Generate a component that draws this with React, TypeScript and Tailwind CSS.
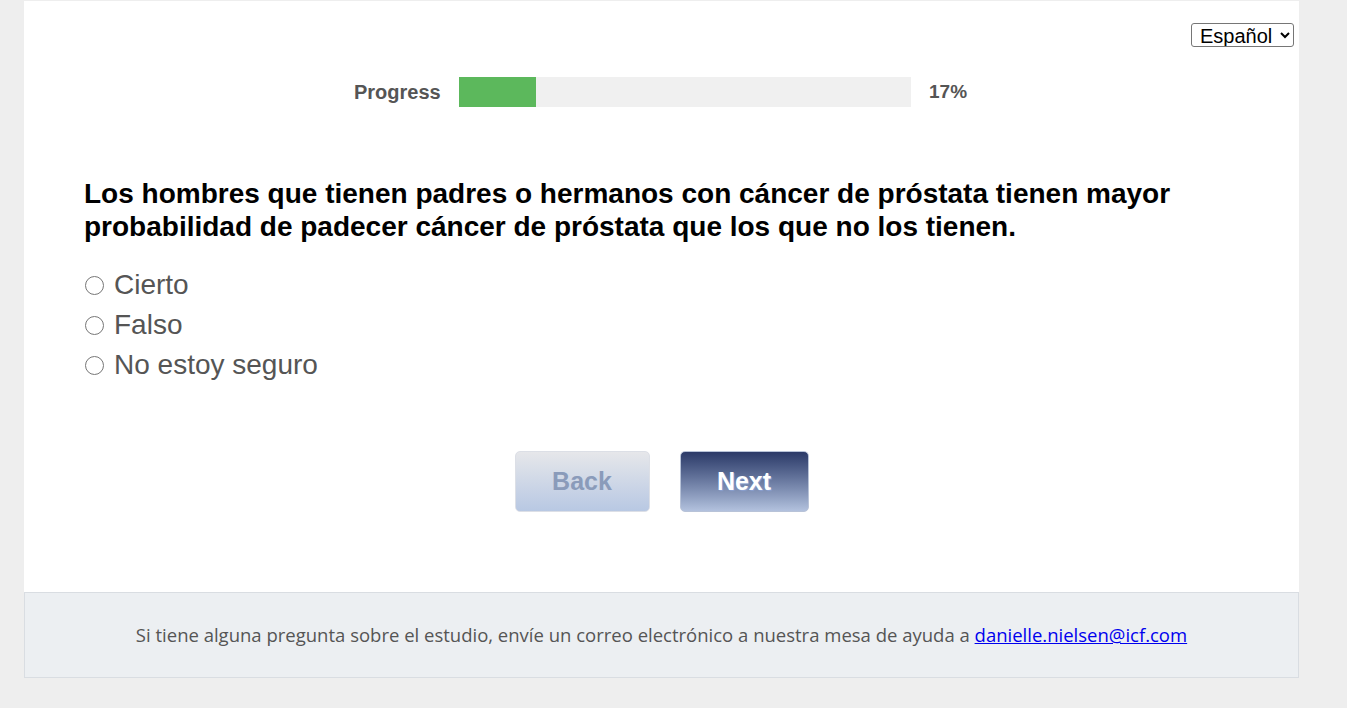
export default function App() {
  return (
    <div className="min-h-[708px] bg-[#eeeeee] pt-px">
      <div className="ml-[24px] w-[1275px] bg-white font-['Liberation_Sans',Arial,sans-serif]">
        <div className="flex justify-end pt-[22px] pr-[5px]">
          <select className="h-[24px] border border-[#767676] rounded-[3px] bg-white text-[20px] text-black px-[4px]" defaultValue="es">
            <option value="es">Español</option>
            <option value="en">English</option>
          </select>
        </div>
        <div className="flex items-center mt-[30px] h-[30px]">
          <span className="ml-[330px] w-[105px] text-[20px] font-bold text-[#555]">Progress</span>
          <div className="w-[452px] h-[30px] bg-[#f0f0f0]">
            <div className="h-full bg-[#5cb85c]" style={{ width: '17%' }} />
          </div>
          <span className="ml-[18px] text-[19px] font-bold text-[#555]">17%</span>
        </div>
        <div className="px-[60px] pt-[70px]">
          <h1 className="text-[28px] leading-[33px] font-bold text-black">
            Los hombres que tienen padres o hermanos con cáncer de próstata tienen mayor probabilidad de padecer cáncer de próstata que los que no los tienen.
          </h1>
          <div className="mt-[22px] flex flex-col">
            {['Cierto', 'Falso', 'No estoy seguro'].map((o) => (
              <label key={o} className="flex items-center h-[40px] text-[28px] text-[#555]">
                <input type="radio" name="q" className="w-[19px] h-[19px] ml-px mr-[10px] accent-[#555]" />
                {o}
              </label>
            ))}
          </div>
        </div>
        <div className="flex justify-center gap-[30px] pt-[66px] pb-[80px]">
          <button className="w-[135px] h-[61px] rounded-[5px] border border-[#dcdfe6] bg-gradient-to-b from-[#e6e7ea] to-[#b8c8e3] text-[25px] font-bold text-[#8a9bba]">
            Back
          </button>
          <button className="w-[129px] h-[61px] rounded-[5px] border border-[#b8c3d8] bg-gradient-to-b from-[#2c3a68] to-[#b3c2de] text-[25px] font-bold text-white [text-shadow:1px_1px_1px_#8aa0d0]">
            Next
          </button>
        </div>
      </div>
      <div className="ml-[24px] w-[1275px] h-[86px] bg-[#eceff2] border border-[#d9dde2] flex items-center justify-center font-['Open_Sans',sans-serif] text-[18.5px] text-[#555]">
        <p>
          Si tiene alguna pregunta sobre el estudio, envíe un correo electrónico a nuestra mesa de ayuda a{' '}
          <a href="#" className="text-[#0000ee] underline">danielle.nielsen@icf.com</a>
        </p>
      </div>
    </div>
  );
}
